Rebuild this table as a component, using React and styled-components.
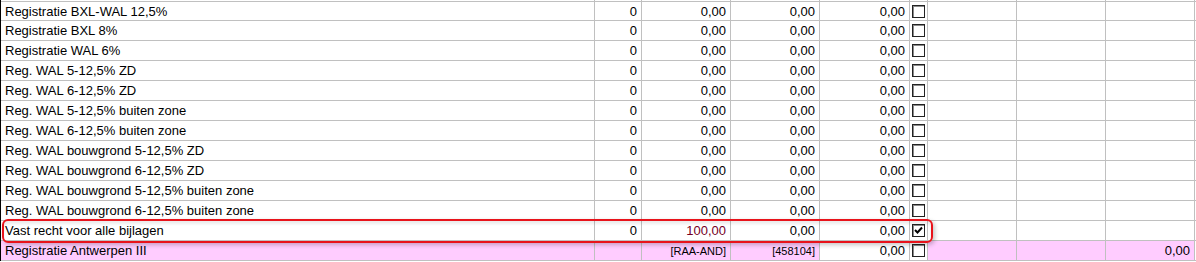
import React from "react";
import styled, { createGlobalStyle } from "styled-components";

const Global = createGlobalStyle`
  html, body { margin: 0; padding: 0; background: #ffffff; }
  body { font-family: "Liberation Sans", Arial, sans-serif; overflow: hidden; }
`;

const COLS = "594px 47px 89px 89px 90px 18px 89px 89px 89px";

const Grid = styled.div`
  position: relative;
  width: 1196px;
  border-left: 1px solid #000;
  box-sizing: border-box;
`;

const Row = styled.div`
  display: grid;
  grid-template-columns: ${COLS};
  height: ${(p) => (p.$stub ? "1px" : "20px")};
  box-sizing: border-box;
  border-bottom: ${(p) => (p.$stub ? "none" : "1px solid #c0c0c0")};
  border-top: ${(p) => (p.$first ? "1px solid #c0c0c0" : "none")};
  font-size: 13px;
  line-height: 19px;
  color: #000;
`;

const Cell = styled.div`
  border-right: 1px solid #c0c0c0;
  background: ${(p) => (p.$pink ? "#ffccff" : "#ffffff")};
  text-align: ${(p) => (p.$left ? "left" : "right")};
  padding: ${(p) => (p.$left ? "1px 0 0 4px" : "1px 4px 0 0")};
  box-sizing: border-box;
  white-space: nowrap;
  overflow: hidden;
  font-size: ${(p) => (p.$small ? "11px" : "13px")};
  line-height: 18px;
  color: ${(p) => (p.$red ? "#75001f" : "#000")};
`;

const BoxCell = styled.div`
  border-right: 1px solid #c0c0c0;
  display: flex;
  align-items: center;
  justify-content: flex-start;
  padding-left: 2px;
  background: #fff;
`;

const Check = styled.span`
  width: 13px;
  height: 13px;
  box-sizing: border-box;
  border: 1px solid #222;
  box-shadow: inset 1px 1px 0 #8a8a8a;
  background: #fff;
  display: inline-flex;
  align-items: center;
  justify-content: center;
`;

const Highlight = styled.div`
  position: absolute;
  left: 1px;
  top: 219px;
  width: 931px;
  height: 24px;
  box-sizing: border-box;
  border: 2px solid #e8131b;
  border-radius: 6px;
  box-shadow: 2px 2px 4px rgba(0, 0, 0, 0.22), inset 0 3px 3px rgba(0, 0, 0, 0.08);
  pointer-events: none;
`;

const rows = [
  "Registratie BXL-WAL 12,5%",
  "Registratie BXL 8%",
  "Registratie WAL 6%",
  "Reg. WAL 5-12,5% ZD",
  "Reg. WAL 6-12,5% ZD",
  "Reg. WAL 5-12,5% buiten zone",
  "Reg. WAL 6-12,5% buiten zone",
  "Reg. WAL bouwgrond 5-12,5% ZD",
  "Reg. WAL bouwgrond 6-12,5% ZD",
  "Reg. WAL bouwgrond 5-12,5% buiten zone",
  "Reg. WAL bouwgrond 6-12,5% buiten zone",
];

function CheckBox({ checked }) {
  return (
    <Check>
      {checked && (
        <svg width="9" height="9" viewBox="0 0 9 9">
          <path d="M1 4 L3.5 6.5 L8 1.5" stroke="#000" strokeWidth="2" fill="none" />
        </svg>
      )}
    </Check>
  );
}

export default function App() {
  return (
    <>
      <Global />
      <Grid>
        <Row $stub>
          <Cell $left />
          <Cell />
          <Cell />
          <Cell />
          <Cell />
          <BoxCell />
          <Cell />
          <Cell />
          <Cell />
        </Row>
        {rows.map((label, i) => (
          <Row key={label} $first={i === 0}>
            <Cell $left>{label}</Cell>
            <Cell>0</Cell>
            <Cell>0,00</Cell>
            <Cell>0,00</Cell>
            <Cell>0,00</Cell>
            <BoxCell>
              <CheckBox />
            </BoxCell>
            <Cell />
            <Cell />
            <Cell />
          </Row>
        ))}
        <Row>
          <Cell $left>Vast recht voor alle bijlagen</Cell>
          <Cell>0</Cell>
          <Cell $red>100,00</Cell>
          <Cell>0,00</Cell>
          <Cell>0,00</Cell>
          <BoxCell>
            <CheckBox checked />
          </BoxCell>
          <Cell />
          <Cell />
          <Cell />
        </Row>
        <Row>
          <Cell $left $pink>Registratie Antwerpen III</Cell>
          <Cell $pink />
          <Cell $pink $small>[RAA-AND]</Cell>
          <Cell $pink $small>[458104]</Cell>
          <Cell>0,00</Cell>
          <BoxCell>
            <CheckBox />
          </BoxCell>
          <Cell $pink />
          <Cell $pink />
          <Cell $pink>0,00</Cell>
        </Row>
        <Highlight />
      </Grid>
    </>
  );
}
